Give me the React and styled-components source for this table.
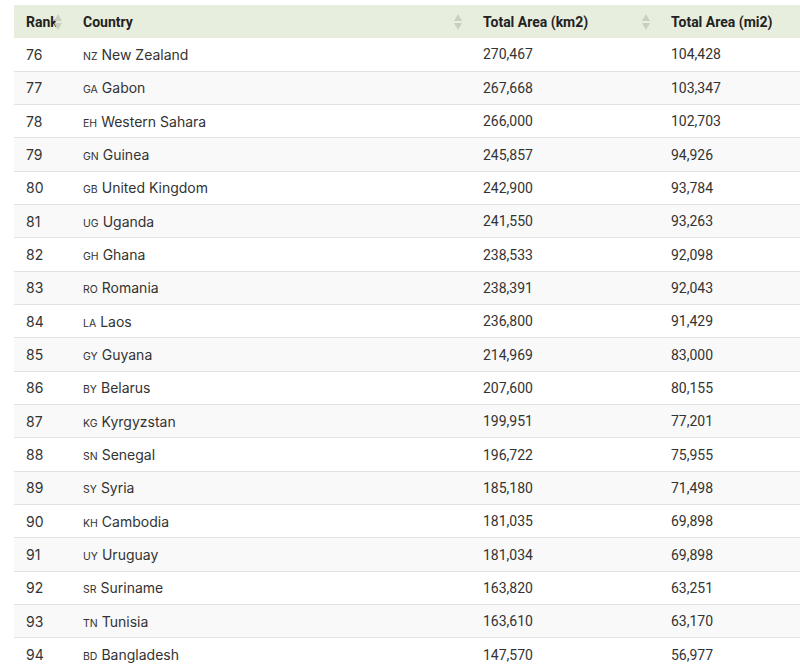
import React from "react";
import styled, { createGlobalStyle } from "styled-components";

const Global = createGlobalStyle`
  html, body { margin: 0; padding: 0; background: #fff; overflow: hidden; }
  body { font-family: Roboto, "Liberation Sans", Arial, sans-serif; }
`;

const Wrap = styled.div`
  padding: 5px 0 0 14px;
  width: 786px;
  overflow: hidden;
`;

const Table = styled.table`
  width: 860px;
  table-layout: fixed;
  border-collapse: collapse;
  font-size: 14px;
  color: #333;
`;

const Th = styled.th`
  position: relative;
  height: 33px;
  padding: 0 12px;
  text-align: left;
  font-weight: 700;
  color: #222;
  background: #e8eedd;
  white-space: nowrap;
`;

const SortIcon = styled.span`
  position: absolute;
  right: 9px;
  top: 50%;
  transform: translateY(-50%);
  display: flex;
  flex-direction: column;
  gap: 2px;
  &::before, &::after {
    content: "";
    display: block;
    width: 0;
    height: 0;
    border-left: 4px solid transparent;
    border-right: 4px solid transparent;
  }
  &::before { border-bottom: 7px solid #c9d0c0; }
  &::after { border-top: 7px solid #c9d0c0; }
`;

const Tr = styled.tr`
  background: ${(p) => (p.$alt ? "#f9f9f9" : "#fff")};
  border-bottom: 1px solid #e2e2e2;
`;

const Td = styled.td`
  height: 33.33px;
  box-sizing: border-box;
  padding: 0 12px;
  white-space: nowrap;
  font-family: ${(p) => (p.$inter ? 'Inter, "Liberation Sans", sans-serif' : 'Roboto, "Liberation Sans", sans-serif')};
`;

const Code = styled.span`
  font-size: 10.5px;
  text-transform: uppercase;
  margin-right: 4px;
  color: #333;
`;

const rows = [
  [76, "nz", "New Zealand", "270,467", "104,428"],
  [77, "ga", "Gabon", "267,668", "103,347"],
  [78, "eh", "Western Sahara", "266,000", "102,703"],
  [79, "gn", "Guinea", "245,857", "94,926"],
  [80, "gb", "United Kingdom", "242,900", "93,784"],
  [81, "ug", "Uganda", "241,550", "93,263"],
  [82, "gh", "Ghana", "238,533", "92,098"],
  [83, "ro", "Romania", "238,391", "92,043"],
  [84, "la", "Laos", "236,800", "91,429"],
  [85, "gy", "Guyana", "214,969", "83,000"],
  [86, "by", "Belarus", "207,600", "80,155"],
  [87, "kg", "Kyrgyzstan", "199,951", "77,201"],
  [88, "sn", "Senegal", "196,722", "75,955"],
  [89, "sy", "Syria", "185,180", "71,498"],
  [90, "kh", "Cambodia", "181,035", "69,898"],
  [91, "uy", "Uruguay", "181,034", "69,898"],
  [92, "sr", "Suriname", "163,820", "63,251"],
  [93, "tn", "Tunisia", "163,610", "63,170"],
  [94, "bd", "Bangladesh", "147,570", "56,977"],
];

export default function App() {
  return (
    <>
      <Global />
      <Wrap>
        <Table>
          <colgroup>
            <col style={{ width: 57 }} />
            <col style={{ width: 400 }} />
            <col style={{ width: 188 }} />
            <col style={{ width: 215 }} />
          </colgroup>
          <thead>
            <tr>
              <Th>Rank<SortIcon /></Th>
              <Th>Country<SortIcon /></Th>
              <Th>Total Area (km2)<SortIcon /></Th>
              <Th>Total Area (mi2)<SortIcon /></Th>
            </tr>
          </thead>
          <tbody>
            {rows.map((r, i) => (
              <Tr key={r[0]} $alt={i % 2 === 1}>
                <Td $inter>{r[0]}</Td>
                <Td $inter>
                  <Code>{r[1]}</Code>
                  {r[2]}
                </Td>
                <Td>{r[3]}</Td>
                <Td>{r[4]}</Td>
              </Tr>
            ))}
          </tbody>
        </Table>
      </Wrap>
    </>
  );
}
